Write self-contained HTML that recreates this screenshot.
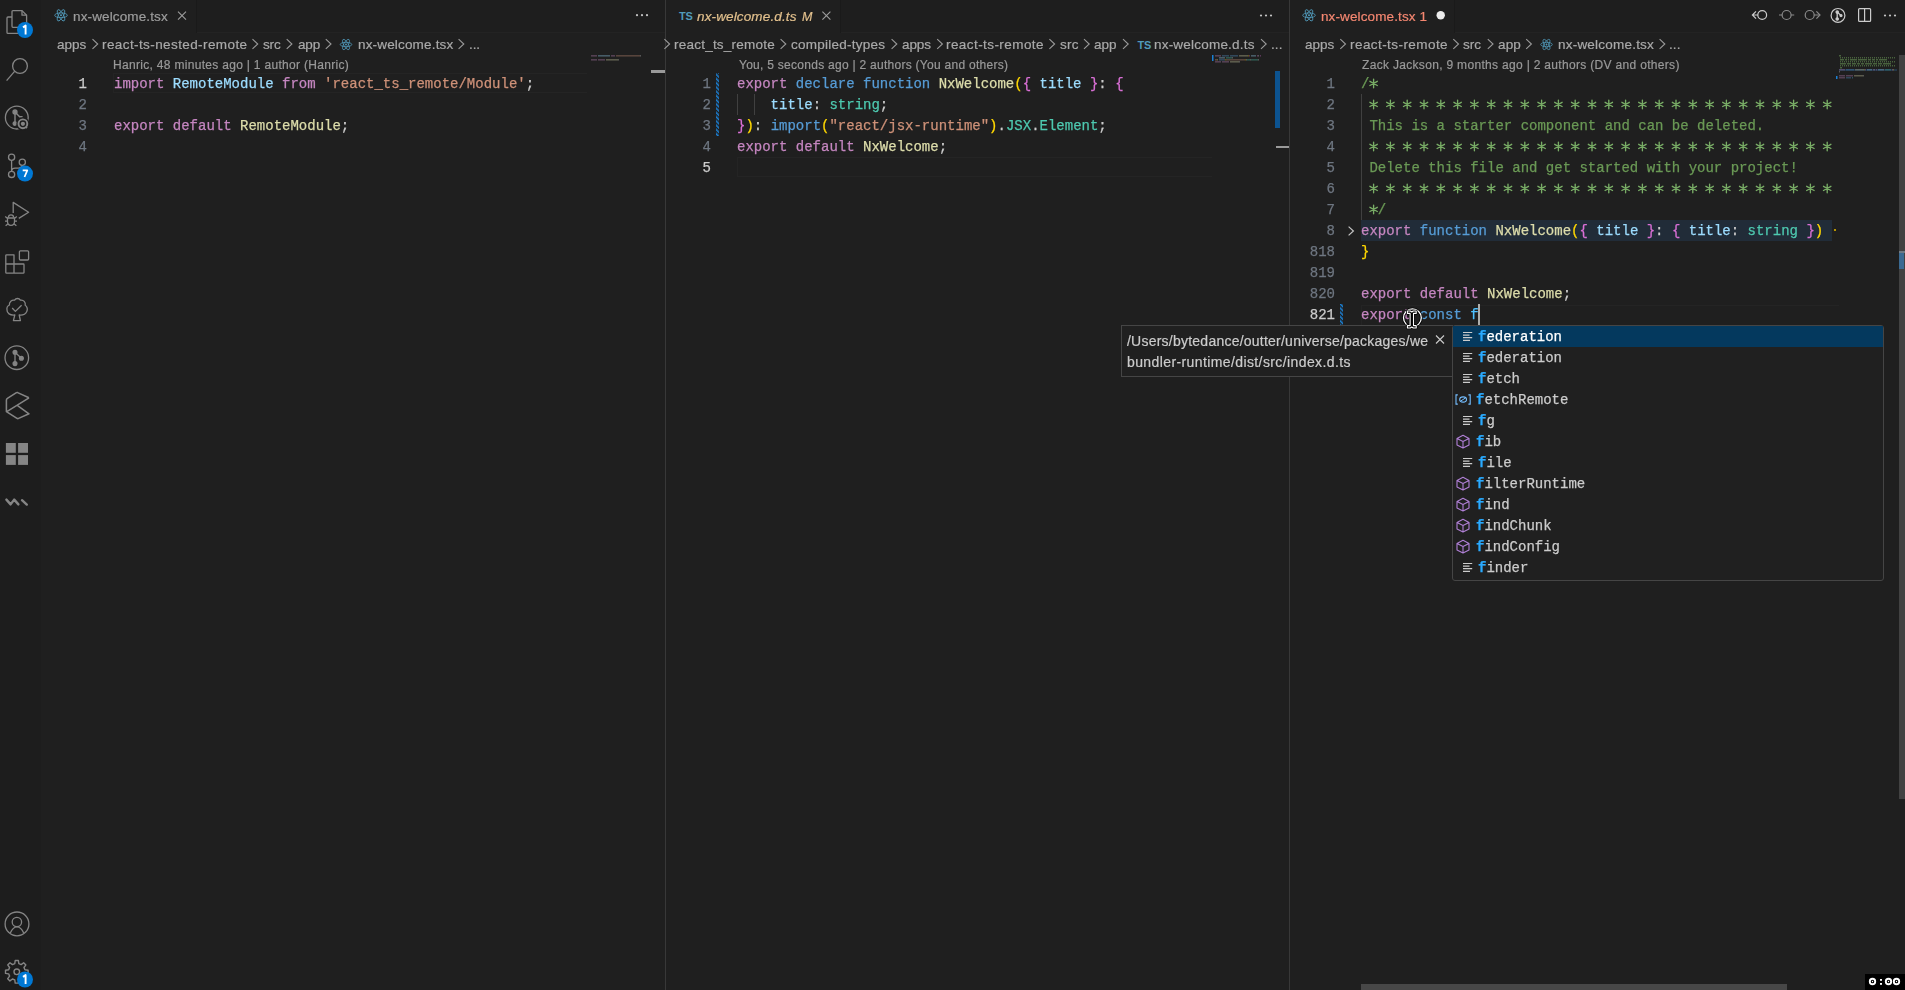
<!DOCTYPE html>
<html><head><meta charset="utf-8">
<style>
*{margin:0;padding:0;box-sizing:border-box}
html,body{width:1905px;height:990px;overflow:hidden;background:#1f1f1f}
body{position:relative;font-family:"Liberation Sans",sans-serif;color:#ccc}
.a{position:absolute}
.sans{position:absolute;line-height:20px;white-space:pre;font-family:"Liberation Sans",sans-serif;will-change:transform;-webkit-text-stroke:0.2px currentColor}
.code,.ln{position:absolute;font-family:"Liberation Mono",monospace;font-size:14px;line-height:21px;white-space:pre;will-change:transform;-webkit-text-stroke:0.25px currentColor}
.ln{text-align:right}
svg{position:absolute;overflow:visible}
</style></head><body>
<div class="a" style="left:0;top:0;width:41px;height:990px;background:#1d1d1d"></div>
<div class="a" style="left:41px;top:0;width:624px;height:32px;background:#1e1e1e"></div>
<div class="a" style="left:197px;top:32px;width:468px;height:1px;background:#232323"></div>
<div class="a" style="left:41px;top:0;width:156px;height:33px;background:#1f1f1f;border-right:1px solid #1a1a1a"></div>
<div class="a" style="left:666px;top:0;width:623px;height:32px;background:#1e1e1e"></div>
<div class="a" style="left:841px;top:32px;width:448px;height:1px;background:#232323"></div>
<div class="a" style="left:666px;top:0;width:175px;height:33px;background:#1f1f1f;border-right:1px solid #1a1a1a"></div>
<div class="a" style="left:1290px;top:0;width:615px;height:32px;background:#1e1e1e"></div>
<div class="a" style="left:1455px;top:32px;width:450px;height:1px;background:#232323"></div>
<div class="a" style="left:1290px;top:0;width:165px;height:33px;background:#1f1f1f;border-right:1px solid #1a1a1a"></div>
<div class="a" style="left:665px;top:0;width:1px;height:990px;background:#383838"></div>
<div class="a" style="left:1289px;top:0;width:1px;height:990px;background:#383838"></div>
<svg width="41" height="990" style="left:0;top:0" fill="none" stroke="#858585" stroke-width="1.3" stroke-linejoin="round">
<!-- explorer -->
<path d="M19 27.3 H13 Q12 27.3 12 26.3 V11.6 Q12 10.6 13 10.6 H22 L26.6 15.2 V25"/><path d="M22 10.6 V15.2 H26.6"/>
<path d="M12 17 H8 Q7 17 7 18 V32.4 Q7 33.4 8 33.4 H18"/>
<!-- search -->
<circle cx="20" cy="66" r="7.4"/><path d="M14.6 71.4 L6.6 80.6"/>
<!-- gitlens -->
<circle cx="16.8" cy="117.6" r="11.4"/>
<path d="M15 112 V124 M15 112 L19.6 116.8 H22.6" stroke-width="1.4"/>
<circle cx="15" cy="112" r="2" fill="#858585"/><circle cx="14.8" cy="123.6" r="1.7" fill="#858585"/>
<circle cx="22.9" cy="123.8" r="6.6" fill="#1d1d1d" stroke="none"/>
<circle cx="22.9" cy="123.8" r="4.4" stroke-width="1.9"/><circle cx="22.9" cy="123.8" r="2.1" fill="#858585" stroke="none"/><path d="M25.8 126.9 L27 128" stroke-width="1.8"/>
<!-- source control -->
<circle cx="11.6" cy="157.3" r="3.1"/><circle cx="22.3" cy="162.3" r="3.1"/><circle cx="11.6" cy="174.4" r="3.1"/>
<path d="M11.6 160.4 V171.3 M11.6 170.8 Q12 168.2 15 168.2 H18.4 Q21.4 168.2 22.1 165.4"/>
<!-- run debug -->
<path d="M13.2 213 V202.4 L28.6 212.3 L18.8 218.4"/>
<path d="M8.4 217.6 Q8.4 214.8 11 214.8 Q13.6 214.8 13.6 217.6"/>
<path d="M7.5 218 H14.5 V221.6 Q14.5 225.4 11 225.4 Q7.5 225.4 7.5 221.6 Z"/>
<path d="M7.4 218.2 L5.2 216.4 M14.6 218.2 L16.8 216.4 M7.4 221.2 H5 M14.6 221.2 H17 M7.8 224 L5.6 225.8 M14.2 224 L16.4 225.8"/>
<!-- extensions -->
<rect x="19.4" y="250.8" width="9.2" height="9.2" rx="1"/>
<path d="M5.8 264 V255.6 Q5.8 254.8 6.6 254.8 H14 V264 H23.4 Q24 264 24 264.8 V272.4 Q24 273.2 23.2 273.2 H6.6 Q5.8 273.2 5.8 272.4 Z M5.8 264 H14 V273.2"/>
<!-- tree check -->
<path d="M14.8 315 C10 315.6 6.8 313 7 310 C6.6 307.6 8 305.6 9.4 305 C9 302 11.8 299.6 14.6 300.2 C16 297.9 19 297.9 20.4 300.2 C23.6 299.6 25.8 302.4 25.2 305.2 C27.4 306.6 27.8 309.6 26.8 311.4 C25.6 314 22.8 315.4 19.2 315 L20.4 320.6 H13.4 Z"/>
<path d="M12.2 308 L15.4 311.4 L21.6 305.3"/>
<!-- git graph -->
<circle cx="16.8" cy="357.7" r="11.8"/>
<path d="M15 352.3 V363.6 M15 352.3 L21.4 358.2"/>
<circle cx="15" cy="352.3" r="1.9" fill="#858585"/><circle cx="15" cy="363.6" r="1.9" fill="#858585"/><circle cx="21.4" cy="358.2" r="1.9" fill="#858585"/>
<!-- hex c -->
<path d="M29 397.8 L17.6 392.6 Q16.8 392.3 16 392.8 L7.4 398.4 Q6.4 399 6.4 400.2 V411.6 L17 418.4 Q17.8 418.9 18.6 418.4 L29 413.8 L17.6 405.6 M29 397.8 L6.8 411.6" stroke-width="1.55"/>
<!-- grid -->
<g fill="#858585" stroke="none"><rect x="5.9" y="443" width="9.9" height="9.8"/><rect x="18.1" y="443" width="9.9" height="9.8"/><rect x="5.9" y="455.1" width="9.9" height="9.8"/><rect x="18.1" y="455.1" width="9.9" height="9.8"/></g>
<!-- wave -->
<path d="M6.4 499.6 L10.6 504.4 L14.2 499.6 L18.4 504.4 M22 500.2 L26.8 504.6" stroke-width="2.4" stroke-linecap="round"/>
<!-- account -->
<circle cx="17" cy="923.9" r="11.9"/><circle cx="16.9" cy="922" r="4.7"/>
<path d="M10.3 933 C12 929 14.5 926.8 17 926.8 C19.5 926.8 22 929 23.7 933"/>
<!-- gear -->
<path d="M14.77,963.65 L15.21,960.51 L18.39,960.51 L18.83,963.65 L21.13,964.60 L23.66,962.70 L25.90,964.94 L24.00,967.47 L24.95,969.77 L28.09,970.21 L28.09,973.39 L24.95,973.83 L24.00,976.13 L25.90,978.66 L23.66,980.90 L21.13,979.00 L18.83,979.95 L18.39,983.09 L15.21,983.09 L14.77,979.95 L12.47,979.00 L9.94,980.90 L7.70,978.66 L9.60,976.13 L8.65,973.83 L5.51,973.39 L5.51,970.21 L8.65,969.77 L9.60,967.47 L7.70,964.94 L9.94,962.70 L12.47,964.60 Z" stroke-width="1.4"/><circle cx="16.8" cy="971.8" r="2.8" stroke-width="1.4"/>
</svg>
<svg width="1" height="1" style="left:0;top:0"><circle cx="25" cy="30" r="8" fill="#0078d4"/><path d="M23 27.4 L25.6 25.6 V34.4" stroke="#fff" stroke-width="1.9" fill="none" stroke-linejoin="round"/><circle cx="25" cy="173.6" r="8" fill="#0078d4"/><path d="M22.7 170.4 H27.3 L24.5 177.0" stroke="#fff" stroke-width="1.7" fill="none" stroke-linejoin="round"/><circle cx="25" cy="979.5" r="8" fill="#0078d4"/><path d="M23 976.9 L25.6 975.1 V983.9" stroke="#fff" stroke-width="1.9" fill="none" stroke-linejoin="round"/></svg>
<svg width="1" height="1" style="left:0;top:0" fill="none" stroke="#519aba" stroke-width="1">
<g transform="translate(61,15.3) scale(1.0)" stroke-width="0.85"><ellipse rx="6.3" ry="2.4"/><ellipse rx="6.3" ry="2.4" transform="rotate(60)"/><ellipse rx="6.3" ry="2.4" transform="rotate(120)"/><circle r="1" fill="#519aba" stroke="none"/></g></svg>
<svg width="1" height="1" style="left:0;top:0" fill="none" stroke="#9d9d9d" stroke-width="1.1"><path d="M178 11.6 L186 19.6 M186 11.6 L178 19.6"/></svg>
<svg width="1" height="1" style="left:0;top:0" fill="#c5c5c5"><circle cx="637" cy="15.2" r="1.1"/><circle cx="642" cy="15.2" r="1.1"/><circle cx="647" cy="15.2" r="1.1"/></svg>
<svg width="1" height="1" style="left:0;top:0" fill="none" stroke="#9a9a9a" stroke-width="1.1"><path d="M92.5 39.2 L97.7 44 L92.5 48.8"/></svg>
<svg width="1" height="1" style="left:0;top:0" fill="none" stroke="#9a9a9a" stroke-width="1.1"><path d="M252.5 39.2 L257.7 44 L252.5 48.8"/></svg>
<svg width="1" height="1" style="left:0;top:0" fill="none" stroke="#9a9a9a" stroke-width="1.1"><path d="M286.7 39.2 L291.9 44 L286.7 48.8"/></svg>
<svg width="1" height="1" style="left:0;top:0" fill="none" stroke="#9a9a9a" stroke-width="1.1"><path d="M325.8 39.2 L331.0 44 L325.8 48.8"/></svg>
<svg width="1" height="1" style="left:0;top:0" fill="none" stroke="#519aba" stroke-width="1">
<g transform="translate(346,44.5) scale(0.92)" stroke-width="0.85"><ellipse rx="6.3" ry="2.4"/><ellipse rx="6.3" ry="2.4" transform="rotate(60)"/><ellipse rx="6.3" ry="2.4" transform="rotate(120)"/><circle r="1" fill="#519aba" stroke="none"/></g></svg>
<svg width="1" height="1" style="left:0;top:0" fill="none" stroke="#9a9a9a" stroke-width="1.1"><path d="M458.6 39.2 L463.8 44 L458.6 48.8"/></svg>
<div class="a" style="left:113px;top:73px;width:474px;height:20px;border:1px solid #242424;border-right:none"></div>
<div class="ln" style="left:26.599999999999994px;top:74px;width:60px;color:#cccccc">1</div>
<div class="ln" style="left:26.599999999999994px;top:95px;width:60px;color:#6e7681">2</div>
<div class="ln" style="left:26.599999999999994px;top:116px;width:60px;color:#6e7681">3</div>
<div class="ln" style="left:26.599999999999994px;top:137px;width:60px;color:#6e7681">4</div>
<div class="code" style="left:113.6px;top:74px"><span style="color:#c586c0">import </span><span style="color:#9cdcfe">RemoteModule </span><span style="color:#c586c0">from </span><span style="color:#ce9178">'react_ts_remote/Module'</span><span style="color:#cccccc">;</span></div>
<div class="code" style="left:113.6px;top:116px"><span style="color:#c586c0">export </span><span style="color:#c586c0">default </span><span style="color:#dcdcaa">RemoteModule</span><span style="color:#cccccc">;</span></div>
<div class="a" style="left:651px;top:70px;width:14px;height:3px;background:#9a9a9a"></div>
<div class="a" style="left:679px;top:8.5px;font:bold 11px/14px 'Liberation Sans';color:#519aba;letter-spacing:-0.3px">TS</div>
<svg width="1" height="1" style="left:0;top:0" fill="none" stroke="#9d9d9d" stroke-width="1.1"><path d="M822.4 11.6 L830.4 19.6 M830.4 11.6 L822.4 19.6"/></svg>
<svg width="1" height="1" style="left:0;top:0" fill="#c5c5c5"><circle cx="1261" cy="15.5" r="1.1"/><circle cx="1266" cy="15.5" r="1.1"/><circle cx="1271" cy="15.5" r="1.1"/></svg>
<svg width="1" height="1" style="left:0;top:0" fill="none" stroke="#9a9a9a" stroke-width="1.1"><path d="M664.4 39.2 L669.6 44 L664.4 48.8"/></svg>
<svg width="1" height="1" style="left:0;top:0" fill="none" stroke="#9a9a9a" stroke-width="1.1"><path d="M780.6 39.2 L785.8000000000001 44 L780.6 48.8"/></svg>
<svg width="1" height="1" style="left:0;top:0" fill="none" stroke="#9a9a9a" stroke-width="1.1"><path d="M891.6 39.2 L896.8000000000001 44 L891.6 48.8"/></svg>
<svg width="1" height="1" style="left:0;top:0" fill="none" stroke="#9a9a9a" stroke-width="1.1"><path d="M937.2 39.2 L942.4000000000001 44 L937.2 48.8"/></svg>
<svg width="1" height="1" style="left:0;top:0" fill="none" stroke="#9a9a9a" stroke-width="1.1"><path d="M1049.4 39.2 L1054.6000000000001 44 L1049.4 48.8"/></svg>
<svg width="1" height="1" style="left:0;top:0" fill="none" stroke="#9a9a9a" stroke-width="1.1"><path d="M1084 39.2 L1089.2 44 L1084 48.8"/></svg>
<svg width="1" height="1" style="left:0;top:0" fill="none" stroke="#9a9a9a" stroke-width="1.1"><path d="M1123 39.2 L1128.2 44 L1123 48.8"/></svg>
<div class="a" style="left:1137.6px;top:37.5px;font:bold 11px/14px 'Liberation Sans';color:#519aba;letter-spacing:-0.3px">TS</div>
<svg width="1" height="1" style="left:0;top:0" fill="none" stroke="#9a9a9a" stroke-width="1.1"><path d="M1261 39.2 L1266.2 44 L1261 48.8"/></svg>
<div class="a" style="left:737px;top:157px;width:475px;height:20px;border:1px solid #242424;border-right:none"></div>
<div class="ln" style="left:651px;top:74px;width:60px;color:#6e7681">1</div>
<div class="ln" style="left:651px;top:95px;width:60px;color:#6e7681">2</div>
<div class="ln" style="left:651px;top:116px;width:60px;color:#6e7681">3</div>
<div class="ln" style="left:651px;top:137px;width:60px;color:#6e7681">4</div>
<div class="ln" style="left:651px;top:158px;width:60px;color:#cccccc">5</div>
<svg width="1" height="1" style="left:0;top:0"><defs><pattern id="hatch" width="3" height="3" patternUnits="userSpaceOnUse" patternTransform="rotate(-45)"><rect width="1.6" height="3" fill="#1b80d4"/></pattern></defs>
<rect x="716" y="73" width="3" height="63" fill="url(#hatch)"/><rect x="1340" y="304" width="3" height="21" fill="url(#hatch)"/></svg>
<div class="a" style="left:737px;top:94px;width:1px;height:21px;background:#404040"></div>
<div class="a" style="left:754px;top:94px;width:1px;height:21px;background:#404040"></div>
<div class="code" style="left:737px;top:74px"><span style="color:#c586c0">export </span><span style="color:#569cd6">declare </span><span style="color:#569cd6">function </span><span style="color:#dcdcaa">NxWelcome</span><span style="color:#ffd700">(</span><span style="color:#da70d6">{ </span><span style="color:#9cdcfe">title </span><span style="color:#da70d6">}</span><span style="color:#cccccc">: </span><span style="color:#da70d6">{</span></div>
<div class="code" style="left:737px;top:95px"><span style="color:#cccccc">    </span><span style="color:#9cdcfe">title</span><span style="color:#cccccc">: </span><span style="color:#4ec9b0">string</span><span style="color:#cccccc">;</span></div>
<div class="code" style="left:737px;top:116px"><span style="color:#da70d6">}</span><span style="color:#ffd700">)</span><span style="color:#cccccc">: </span><span style="color:#569cd6">import</span><span style="color:#ffd700">(</span><span style="color:#ce9178">"react/jsx-runtime"</span><span style="color:#ffd700">)</span><span style="color:#cccccc">.</span><span style="color:#4ec9b0">JSX</span><span style="color:#cccccc">.</span><span style="color:#4ec9b0">Element</span><span style="color:#cccccc">;</span></div>
<div class="code" style="left:737px;top:137px"><span style="color:#c586c0">export </span><span style="color:#c586c0">default </span><span style="color:#dcdcaa">NxWelcome</span><span style="color:#cccccc">;</span></div>
<div class="a" style="left:1275px;top:71px;width:5px;height:57px;background:#0c5390"></div>
<div class="a" style="left:1276px;top:146px;width:13px;height:2px;background:#9a9a9a"></div>
<svg width="1" height="1" style="left:0;top:0" fill="none" stroke="#519aba" stroke-width="1">
<g transform="translate(1309,15.3) scale(1.0)" stroke-width="0.85"><ellipse rx="6.3" ry="2.4"/><ellipse rx="6.3" ry="2.4" transform="rotate(60)"/><ellipse rx="6.3" ry="2.4" transform="rotate(120)"/><circle r="1" fill="#519aba" stroke="none"/></g></svg>
<svg width="1" height="1" style="left:0;top:0"><circle cx="1440.7" cy="15.2" r="4.2" fill="#ececec"/></svg>
<svg width="1" height="1" style="left:0;top:0" fill="none" stroke-width="1.2">
<g stroke="#cccccc"><circle cx="1762.2" cy="15" r="4.4"/><path d="M1757.8 15 H1753.5 M1756 11.3 L1752.4 15 L1756 18.7"/></g>
<g stroke="#8a8a8a"><circle cx="1786.6" cy="15" r="4.5"/><path d="M1779 15 H1782.1 M1791.1 15 H1794.2"/></g>
<g stroke="#8a8a8a"><circle cx="1809.7" cy="15" r="4.5"/><path d="M1814.2 15 H1818.6 M1816.4 11.3 L1820 15 L1816.4 18.7"/></g>
<g stroke="#cccccc"><circle cx="1838" cy="15.4" r="6.9"/><path d="M1837.2 12.1 V19 M1837.2 12.1 L1841 15.4" stroke-width="1.3"/><circle cx="1837.2" cy="12.1" r="1.2" fill="#ccc"/><circle cx="1837.2" cy="19" r="1.2" fill="#ccc"/><circle cx="1841" cy="15.6" r="1" fill="#ccc"/></g>
<g stroke="#cccccc"><rect x="1858.6" y="8.6" width="12" height="12.8" rx="1"/><path d="M1864.6 8.6 V21.4"/></g>
</svg>
<svg width="1" height="1" style="left:0;top:0" fill="#c5c5c5"><circle cx="1885" cy="15.5" r="1.1"/><circle cx="1890" cy="15.5" r="1.1"/><circle cx="1895" cy="15.5" r="1.1"/></svg>
<svg width="1" height="1" style="left:0;top:0" fill="none" stroke="#9a9a9a" stroke-width="1.1"><path d="M1340.3 39.2 L1345.5 44 L1340.3 48.8"/></svg>
<svg width="1" height="1" style="left:0;top:0" fill="none" stroke="#9a9a9a" stroke-width="1.1"><path d="M1453.3 39.2 L1458.5 44 L1453.3 48.8"/></svg>
<svg width="1" height="1" style="left:0;top:0" fill="none" stroke="#9a9a9a" stroke-width="1.1"><path d="M1487.8 39.2 L1493.0 44 L1487.8 48.8"/></svg>
<svg width="1" height="1" style="left:0;top:0" fill="none" stroke="#9a9a9a" stroke-width="1.1"><path d="M1526.2 39.2 L1531.4 44 L1526.2 48.8"/></svg>
<svg width="1" height="1" style="left:0;top:0" fill="none" stroke="#519aba" stroke-width="1">
<g transform="translate(1546.5,44.5) scale(0.92)" stroke-width="0.85"><ellipse rx="6.3" ry="2.4"/><ellipse rx="6.3" ry="2.4" transform="rotate(60)"/><ellipse rx="6.3" ry="2.4" transform="rotate(120)"/><circle r="1" fill="#519aba" stroke="none"/></g></svg>
<svg width="1" height="1" style="left:0;top:0" fill="none" stroke="#9a9a9a" stroke-width="1.1"><path d="M1659.6 39.2 L1664.8 44 L1659.6 48.8"/></svg>
<div class="ln" style="left:1275px;top:74px;width:60px;color:#6e7681">1</div>
<div class="ln" style="left:1275px;top:95px;width:60px;color:#6e7681">2</div>
<div class="ln" style="left:1275px;top:116px;width:60px;color:#6e7681">3</div>
<div class="ln" style="left:1275px;top:137px;width:60px;color:#6e7681">4</div>
<div class="ln" style="left:1275px;top:158px;width:60px;color:#6e7681">5</div>
<div class="ln" style="left:1275px;top:179px;width:60px;color:#6e7681">6</div>
<div class="ln" style="left:1275px;top:200px;width:60px;color:#6e7681">7</div>
<div class="ln" style="left:1275px;top:221px;width:60px;color:#6e7681">8</div>
<div class="ln" style="left:1275px;top:242px;width:60px;color:#6e7681">818</div>
<div class="ln" style="left:1275px;top:263px;width:60px;color:#6e7681">819</div>
<div class="ln" style="left:1275px;top:284px;width:60px;color:#6e7681">820</div>
<div class="ln" style="left:1275px;top:305px;width:60px;color:#cccccc">821</div>
<div class="a" style="left:1361px;top:94px;width:1px;height:126px;background:#404040"></div>
<div class="a" style="left:1361px;top:220px;width:471px;height:21px;background:#212c38"></div>
<div class="a" style="left:1361px;top:305px;width:478px;height:21px;border:1px solid #242424;border-right:none;border-bottom:none"></div>
<div class="code" style="left:1361px;top:74px"><span style="color:#6a9955">/</span></div>
<svg width="1" height="1" style="left:0;top:0"><path d="M1373.6 79.1 V87.7 M1369.9 81.3 L1377.3 85.5 M1369.9 85.5 L1377.3 81.3 M1373.6 100.1 V108.7 M1369.9 102.3 L1377.3 106.5 M1369.9 106.5 L1377.3 102.3 M1390.4 100.1 V108.7 M1386.7 102.3 L1394.1 106.5 M1386.7 106.5 L1394.1 102.3 M1407.2 100.1 V108.7 M1403.5 102.3 L1410.9 106.5 M1403.5 106.5 L1410.9 102.3 M1424.0 100.1 V108.7 M1420.3 102.3 L1427.7 106.5 M1420.3 106.5 L1427.7 102.3 M1440.8 100.1 V108.7 M1437.1 102.3 L1444.5 106.5 M1437.1 106.5 L1444.5 102.3 M1457.6 100.1 V108.7 M1453.9 102.3 L1461.3 106.5 M1453.9 106.5 L1461.3 102.3 M1474.4 100.1 V108.7 M1470.7 102.3 L1478.1 106.5 M1470.7 106.5 L1478.1 102.3 M1491.2 100.1 V108.7 M1487.5 102.3 L1494.9 106.5 M1487.5 106.5 L1494.9 102.3 M1508.0 100.1 V108.7 M1504.3 102.3 L1511.7 106.5 M1504.3 106.5 L1511.7 102.3 M1524.8 100.1 V108.7 M1521.1 102.3 L1528.5 106.5 M1521.1 106.5 L1528.5 102.3 M1541.6 100.1 V108.7 M1537.9 102.3 L1545.3 106.5 M1537.9 106.5 L1545.3 102.3 M1558.4 100.1 V108.7 M1554.7 102.3 L1562.1 106.5 M1554.7 106.5 L1562.1 102.3 M1575.2 100.1 V108.7 M1571.5 102.3 L1578.9 106.5 M1571.5 106.5 L1578.9 102.3 M1592.0 100.1 V108.7 M1588.3 102.3 L1595.7 106.5 M1588.3 106.5 L1595.7 102.3 M1608.8 100.1 V108.7 M1605.1 102.3 L1612.5 106.5 M1605.1 106.5 L1612.5 102.3 M1625.6 100.1 V108.7 M1621.9 102.3 L1629.3 106.5 M1621.9 106.5 L1629.3 102.3 M1642.4 100.1 V108.7 M1638.7 102.3 L1646.1 106.5 M1638.7 106.5 L1646.1 102.3 M1659.2 100.1 V108.7 M1655.5 102.3 L1662.9 106.5 M1655.5 106.5 L1662.9 102.3 M1676.0 100.1 V108.7 M1672.3 102.3 L1679.7 106.5 M1672.3 106.5 L1679.7 102.3 M1692.8 100.1 V108.7 M1689.1 102.3 L1696.5 106.5 M1689.1 106.5 L1696.5 102.3 M1709.6 100.1 V108.7 M1705.9 102.3 L1713.3 106.5 M1705.9 106.5 L1713.3 102.3 M1726.4 100.1 V108.7 M1722.7 102.3 L1730.1 106.5 M1722.7 106.5 L1730.1 102.3 M1743.2 100.1 V108.7 M1739.5 102.3 L1746.9 106.5 M1739.5 106.5 L1746.9 102.3 M1760.0 100.1 V108.7 M1756.3 102.3 L1763.7 106.5 M1756.3 106.5 L1763.7 102.3 M1776.8 100.1 V108.7 M1773.1 102.3 L1780.5 106.5 M1773.1 106.5 L1780.5 102.3 M1793.6 100.1 V108.7 M1789.9 102.3 L1797.3 106.5 M1789.9 106.5 L1797.3 102.3 M1810.4 100.1 V108.7 M1806.7 102.3 L1814.1 106.5 M1806.7 106.5 L1814.1 102.3 M1827.2 100.1 V108.7 M1823.5 102.3 L1830.9 106.5 M1823.5 106.5 L1830.9 102.3 M1373.6 142.1 V150.7 M1369.9 144.3 L1377.3 148.5 M1369.9 148.5 L1377.3 144.3 M1390.4 142.1 V150.7 M1386.7 144.3 L1394.1 148.5 M1386.7 148.5 L1394.1 144.3 M1407.2 142.1 V150.7 M1403.5 144.3 L1410.9 148.5 M1403.5 148.5 L1410.9 144.3 M1424.0 142.1 V150.7 M1420.3 144.3 L1427.7 148.5 M1420.3 148.5 L1427.7 144.3 M1440.8 142.1 V150.7 M1437.1 144.3 L1444.5 148.5 M1437.1 148.5 L1444.5 144.3 M1457.6 142.1 V150.7 M1453.9 144.3 L1461.3 148.5 M1453.9 148.5 L1461.3 144.3 M1474.4 142.1 V150.7 M1470.7 144.3 L1478.1 148.5 M1470.7 148.5 L1478.1 144.3 M1491.2 142.1 V150.7 M1487.5 144.3 L1494.9 148.5 M1487.5 148.5 L1494.9 144.3 M1508.0 142.1 V150.7 M1504.3 144.3 L1511.7 148.5 M1504.3 148.5 L1511.7 144.3 M1524.8 142.1 V150.7 M1521.1 144.3 L1528.5 148.5 M1521.1 148.5 L1528.5 144.3 M1541.6 142.1 V150.7 M1537.9 144.3 L1545.3 148.5 M1537.9 148.5 L1545.3 144.3 M1558.4 142.1 V150.7 M1554.7 144.3 L1562.1 148.5 M1554.7 148.5 L1562.1 144.3 M1575.2 142.1 V150.7 M1571.5 144.3 L1578.9 148.5 M1571.5 148.5 L1578.9 144.3 M1592.0 142.1 V150.7 M1588.3 144.3 L1595.7 148.5 M1588.3 148.5 L1595.7 144.3 M1608.8 142.1 V150.7 M1605.1 144.3 L1612.5 148.5 M1605.1 148.5 L1612.5 144.3 M1625.6 142.1 V150.7 M1621.9 144.3 L1629.3 148.5 M1621.9 148.5 L1629.3 144.3 M1642.4 142.1 V150.7 M1638.7 144.3 L1646.1 148.5 M1638.7 148.5 L1646.1 144.3 M1659.2 142.1 V150.7 M1655.5 144.3 L1662.9 148.5 M1655.5 148.5 L1662.9 144.3 M1676.0 142.1 V150.7 M1672.3 144.3 L1679.7 148.5 M1672.3 148.5 L1679.7 144.3 M1692.8 142.1 V150.7 M1689.1 144.3 L1696.5 148.5 M1689.1 148.5 L1696.5 144.3 M1709.6 142.1 V150.7 M1705.9 144.3 L1713.3 148.5 M1705.9 148.5 L1713.3 144.3 M1726.4 142.1 V150.7 M1722.7 144.3 L1730.1 148.5 M1722.7 148.5 L1730.1 144.3 M1743.2 142.1 V150.7 M1739.5 144.3 L1746.9 148.5 M1739.5 148.5 L1746.9 144.3 M1760.0 142.1 V150.7 M1756.3 144.3 L1763.7 148.5 M1756.3 148.5 L1763.7 144.3 M1776.8 142.1 V150.7 M1773.1 144.3 L1780.5 148.5 M1773.1 148.5 L1780.5 144.3 M1793.6 142.1 V150.7 M1789.9 144.3 L1797.3 148.5 M1789.9 148.5 L1797.3 144.3 M1810.4 142.1 V150.7 M1806.7 144.3 L1814.1 148.5 M1806.7 148.5 L1814.1 144.3 M1827.2 142.1 V150.7 M1823.5 144.3 L1830.9 148.5 M1823.5 148.5 L1830.9 144.3 M1373.6 184.1 V192.7 M1369.9 186.3 L1377.3 190.5 M1369.9 190.5 L1377.3 186.3 M1390.4 184.1 V192.7 M1386.7 186.3 L1394.1 190.5 M1386.7 190.5 L1394.1 186.3 M1407.2 184.1 V192.7 M1403.5 186.3 L1410.9 190.5 M1403.5 190.5 L1410.9 186.3 M1424.0 184.1 V192.7 M1420.3 186.3 L1427.7 190.5 M1420.3 190.5 L1427.7 186.3 M1440.8 184.1 V192.7 M1437.1 186.3 L1444.5 190.5 M1437.1 190.5 L1444.5 186.3 M1457.6 184.1 V192.7 M1453.9 186.3 L1461.3 190.5 M1453.9 190.5 L1461.3 186.3 M1474.4 184.1 V192.7 M1470.7 186.3 L1478.1 190.5 M1470.7 190.5 L1478.1 186.3 M1491.2 184.1 V192.7 M1487.5 186.3 L1494.9 190.5 M1487.5 190.5 L1494.9 186.3 M1508.0 184.1 V192.7 M1504.3 186.3 L1511.7 190.5 M1504.3 190.5 L1511.7 186.3 M1524.8 184.1 V192.7 M1521.1 186.3 L1528.5 190.5 M1521.1 190.5 L1528.5 186.3 M1541.6 184.1 V192.7 M1537.9 186.3 L1545.3 190.5 M1537.9 190.5 L1545.3 186.3 M1558.4 184.1 V192.7 M1554.7 186.3 L1562.1 190.5 M1554.7 190.5 L1562.1 186.3 M1575.2 184.1 V192.7 M1571.5 186.3 L1578.9 190.5 M1571.5 190.5 L1578.9 186.3 M1592.0 184.1 V192.7 M1588.3 186.3 L1595.7 190.5 M1588.3 190.5 L1595.7 186.3 M1608.8 184.1 V192.7 M1605.1 186.3 L1612.5 190.5 M1605.1 190.5 L1612.5 186.3 M1625.6 184.1 V192.7 M1621.9 186.3 L1629.3 190.5 M1621.9 190.5 L1629.3 186.3 M1642.4 184.1 V192.7 M1638.7 186.3 L1646.1 190.5 M1638.7 190.5 L1646.1 186.3 M1659.2 184.1 V192.7 M1655.5 186.3 L1662.9 190.5 M1655.5 190.5 L1662.9 186.3 M1676.0 184.1 V192.7 M1672.3 186.3 L1679.7 190.5 M1672.3 190.5 L1679.7 186.3 M1692.8 184.1 V192.7 M1689.1 186.3 L1696.5 190.5 M1689.1 190.5 L1696.5 186.3 M1709.6 184.1 V192.7 M1705.9 186.3 L1713.3 190.5 M1705.9 190.5 L1713.3 186.3 M1726.4 184.1 V192.7 M1722.7 186.3 L1730.1 190.5 M1722.7 190.5 L1730.1 186.3 M1743.2 184.1 V192.7 M1739.5 186.3 L1746.9 190.5 M1739.5 190.5 L1746.9 186.3 M1760.0 184.1 V192.7 M1756.3 186.3 L1763.7 190.5 M1756.3 190.5 L1763.7 186.3 M1776.8 184.1 V192.7 M1773.1 186.3 L1780.5 190.5 M1773.1 190.5 L1780.5 186.3 M1793.6 184.1 V192.7 M1789.9 186.3 L1797.3 190.5 M1789.9 190.5 L1797.3 186.3 M1810.4 184.1 V192.7 M1806.7 186.3 L1814.1 190.5 M1806.7 190.5 L1814.1 186.3 M1827.2 184.1 V192.7 M1823.5 186.3 L1830.9 190.5 M1823.5 190.5 L1830.9 186.3 M1373.6 205.1 V213.7 M1369.9 207.3 L1377.3 211.5 M1369.9 211.5 L1377.3 207.3" stroke="#79ad66" stroke-width="1.35" stroke-linecap="round" fill="none"/></svg>
<div class="code" style="left:1361px;top:116px"><span style="color:#6a9955"> This is a starter component and can be deleted.</span></div>
<div class="code" style="left:1361px;top:158px"><span style="color:#6a9955"> Delete this file and get started with your project!</span></div>
<div class="code" style="left:1361px;top:200px"><span style="color:#6a9955">  /</span></div>
<div class="code" style="left:1361px;top:221px"><span style="color:#c586c0">export </span><span style="color:#569cd6">function </span><span style="color:#dcdcaa">NxWelcome</span><span style="color:#ffd700">(</span><span style="color:#da70d6">{ </span><span style="color:#9cdcfe">title </span><span style="color:#da70d6">}</span><span style="color:#cccccc">: </span><span style="color:#da70d6">{ </span><span style="color:#9cdcfe">title</span><span style="color:#cccccc">: </span><span style="color:#4ec9b0">string </span><span style="color:#da70d6">}</span><span style="color:#ffd700">)</span></div>
<div class="a" style="left:1834px;top:229px;width:2px;height:2px;background:#b89500"></div>
<svg width="1" height="1" style="left:0;top:0" fill="none" stroke="#c5c5c5" stroke-width="1.2"><path d="M1348.6 226.6 L1353.4 231 L1348.6 235.4"/></svg>
<div class="code" style="left:1361px;top:242px"><span style="color:#ffd700">}</span></div>
<div class="code" style="left:1361px;top:284px"><span style="color:#c586c0">export </span><span style="color:#c586c0">default </span><span style="color:#dcdcaa">NxWelcome</span><span style="color:#cccccc">;</span></div>
<div class="code" style="left:1361px;top:305px"><span style="color:#c586c0">export </span><span style="color:#569cd6">const </span><span style="color:#4fc1ff">f</span></div>
<div class="a" style="left:1478px;top:304px;width:2px;height:21px;background:#aeafad"></div>
<svg width="1905" height="100" style="left:0;top:0"><rect x="591" y="55" width="1" height="1.6" fill="#c586c0" opacity="0.32"/><rect x="592" y="55" width="1" height="1.6" fill="#c586c0" opacity="0.32"/><rect x="593" y="55" width="1" height="1.6" fill="#c586c0" opacity="0.32"/><rect x="594" y="55" width="1" height="1.6" fill="#c586c0" opacity="0.32"/><rect x="595" y="55" width="1" height="1.6" fill="#c586c0" opacity="0.32"/><rect x="596" y="55" width="1" height="1.6" fill="#c586c0" opacity="0.32"/><rect x="598" y="55" width="1" height="1.6" fill="#9cdcfe" opacity="0.32"/><rect x="599" y="55" width="1" height="1.6" fill="#9cdcfe" opacity="0.32"/><rect x="600" y="55" width="1" height="1.6" fill="#9cdcfe" opacity="0.32"/><rect x="601" y="55" width="1" height="1.6" fill="#9cdcfe" opacity="0.32"/><rect x="602" y="55" width="1" height="1.6" fill="#9cdcfe" opacity="0.32"/><rect x="603" y="55" width="1" height="1.6" fill="#9cdcfe" opacity="0.32"/><rect x="604" y="55" width="1" height="1.6" fill="#9cdcfe" opacity="0.32"/><rect x="605" y="55" width="1" height="1.6" fill="#9cdcfe" opacity="0.32"/><rect x="606" y="55" width="1" height="1.6" fill="#9cdcfe" opacity="0.32"/><rect x="607" y="55" width="1" height="1.6" fill="#9cdcfe" opacity="0.32"/><rect x="608" y="55" width="1" height="1.6" fill="#9cdcfe" opacity="0.32"/><rect x="609" y="55" width="1" height="1.6" fill="#9cdcfe" opacity="0.32"/><rect x="611" y="55" width="1" height="1.6" fill="#c586c0" opacity="0.32"/><rect x="612" y="55" width="1" height="1.6" fill="#c586c0" opacity="0.32"/><rect x="613" y="55" width="1" height="1.6" fill="#c586c0" opacity="0.32"/><rect x="614" y="55" width="1" height="1.6" fill="#c586c0" opacity="0.32"/><rect x="616" y="55" width="1" height="1.6" fill="#ce9178" opacity="0.32"/><rect x="617" y="55" width="1" height="1.6" fill="#ce9178" opacity="0.32"/><rect x="618" y="55" width="1" height="1.6" fill="#ce9178" opacity="0.32"/><rect x="619" y="55" width="1" height="1.6" fill="#ce9178" opacity="0.32"/><rect x="620" y="55" width="1" height="1.6" fill="#ce9178" opacity="0.32"/><rect x="621" y="55" width="1" height="1.6" fill="#ce9178" opacity="0.32"/><rect x="622" y="55" width="1" height="1.6" fill="#ce9178" opacity="0.32"/><rect x="623" y="55" width="1" height="1.6" fill="#ce9178" opacity="0.32"/><rect x="624" y="55" width="1" height="1.6" fill="#ce9178" opacity="0.32"/><rect x="625" y="55" width="1" height="1.6" fill="#ce9178" opacity="0.32"/><rect x="626" y="55" width="1" height="1.6" fill="#ce9178" opacity="0.32"/><rect x="627" y="55" width="1" height="1.6" fill="#ce9178" opacity="0.32"/><rect x="628" y="55" width="1" height="1.6" fill="#ce9178" opacity="0.32"/><rect x="629" y="55" width="1" height="1.6" fill="#ce9178" opacity="0.32"/><rect x="630" y="55" width="1" height="1.6" fill="#ce9178" opacity="0.32"/><rect x="631" y="55" width="1" height="1.6" fill="#ce9178" opacity="0.32"/><rect x="632" y="55" width="1" height="1.6" fill="#ce9178" opacity="0.32"/><rect x="633" y="55" width="1" height="1.6" fill="#ce9178" opacity="0.32"/><rect x="634" y="55" width="1" height="1.6" fill="#ce9178" opacity="0.32"/><rect x="635" y="55" width="1" height="1.6" fill="#ce9178" opacity="0.32"/><rect x="636" y="55" width="1" height="1.6" fill="#ce9178" opacity="0.32"/><rect x="637" y="55" width="1" height="1.6" fill="#ce9178" opacity="0.32"/><rect x="638" y="55" width="1" height="1.6" fill="#ce9178" opacity="0.32"/><rect x="639" y="55" width="1" height="1.6" fill="#ce9178" opacity="0.32"/><rect x="640" y="55" width="1" height="1.6" fill="#cccccc" opacity="0.32"/><rect x="591" y="59" width="1" height="1.6" fill="#c586c0" opacity="0.32"/><rect x="592" y="59" width="1" height="1.6" fill="#c586c0" opacity="0.32"/><rect x="593" y="59" width="1" height="1.6" fill="#c586c0" opacity="0.32"/><rect x="594" y="59" width="1" height="1.6" fill="#c586c0" opacity="0.32"/><rect x="595" y="59" width="1" height="1.6" fill="#c586c0" opacity="0.32"/><rect x="596" y="59" width="1" height="1.6" fill="#c586c0" opacity="0.32"/><rect x="598" y="59" width="1" height="1.6" fill="#c586c0" opacity="0.32"/><rect x="599" y="59" width="1" height="1.6" fill="#c586c0" opacity="0.32"/><rect x="600" y="59" width="1" height="1.6" fill="#c586c0" opacity="0.32"/><rect x="601" y="59" width="1" height="1.6" fill="#c586c0" opacity="0.32"/><rect x="602" y="59" width="1" height="1.6" fill="#c586c0" opacity="0.32"/><rect x="603" y="59" width="1" height="1.6" fill="#c586c0" opacity="0.32"/><rect x="604" y="59" width="1" height="1.6" fill="#c586c0" opacity="0.32"/><rect x="606" y="59" width="1" height="1.6" fill="#dcdcaa" opacity="0.32"/><rect x="607" y="59" width="1" height="1.6" fill="#dcdcaa" opacity="0.32"/><rect x="608" y="59" width="1" height="1.6" fill="#dcdcaa" opacity="0.32"/><rect x="609" y="59" width="1" height="1.6" fill="#dcdcaa" opacity="0.32"/><rect x="610" y="59" width="1" height="1.6" fill="#dcdcaa" opacity="0.32"/><rect x="611" y="59" width="1" height="1.6" fill="#dcdcaa" opacity="0.32"/><rect x="612" y="59" width="1" height="1.6" fill="#dcdcaa" opacity="0.32"/><rect x="613" y="59" width="1" height="1.6" fill="#dcdcaa" opacity="0.32"/><rect x="614" y="59" width="1" height="1.6" fill="#dcdcaa" opacity="0.32"/><rect x="615" y="59" width="1" height="1.6" fill="#dcdcaa" opacity="0.32"/><rect x="616" y="59" width="1" height="1.6" fill="#dcdcaa" opacity="0.32"/><rect x="617" y="59" width="1" height="1.6" fill="#dcdcaa" opacity="0.32"/><rect x="618" y="59" width="1" height="1.6" fill="#cccccc" opacity="0.32"/><rect x="1215" y="55" width="1" height="1.6" fill="#c586c0" opacity="0.32"/><rect x="1216" y="55" width="1" height="1.6" fill="#c586c0" opacity="0.32"/><rect x="1217" y="55" width="1" height="1.6" fill="#c586c0" opacity="0.32"/><rect x="1218" y="55" width="1" height="1.6" fill="#c586c0" opacity="0.32"/><rect x="1219" y="55" width="1" height="1.6" fill="#c586c0" opacity="0.32"/><rect x="1220" y="55" width="1" height="1.6" fill="#c586c0" opacity="0.32"/><rect x="1222" y="55" width="1" height="1.6" fill="#569cd6" opacity="0.32"/><rect x="1223" y="55" width="1" height="1.6" fill="#569cd6" opacity="0.32"/><rect x="1224" y="55" width="1" height="1.6" fill="#569cd6" opacity="0.32"/><rect x="1225" y="55" width="1" height="1.6" fill="#569cd6" opacity="0.32"/><rect x="1226" y="55" width="1" height="1.6" fill="#569cd6" opacity="0.32"/><rect x="1227" y="55" width="1" height="1.6" fill="#569cd6" opacity="0.32"/><rect x="1228" y="55" width="1" height="1.6" fill="#569cd6" opacity="0.32"/><rect x="1230" y="55" width="1" height="1.6" fill="#569cd6" opacity="0.32"/><rect x="1231" y="55" width="1" height="1.6" fill="#569cd6" opacity="0.32"/><rect x="1232" y="55" width="1" height="1.6" fill="#569cd6" opacity="0.32"/><rect x="1233" y="55" width="1" height="1.6" fill="#569cd6" opacity="0.32"/><rect x="1234" y="55" width="1" height="1.6" fill="#569cd6" opacity="0.32"/><rect x="1235" y="55" width="1" height="1.6" fill="#569cd6" opacity="0.32"/><rect x="1236" y="55" width="1" height="1.6" fill="#569cd6" opacity="0.32"/><rect x="1237" y="55" width="1" height="1.6" fill="#569cd6" opacity="0.32"/><rect x="1239" y="55" width="1" height="1.6" fill="#dcdcaa" opacity="0.32"/><rect x="1240" y="55" width="1" height="1.6" fill="#dcdcaa" opacity="0.32"/><rect x="1241" y="55" width="1" height="1.6" fill="#dcdcaa" opacity="0.32"/><rect x="1242" y="55" width="1" height="1.6" fill="#dcdcaa" opacity="0.32"/><rect x="1243" y="55" width="1" height="1.6" fill="#dcdcaa" opacity="0.32"/><rect x="1244" y="55" width="1" height="1.6" fill="#dcdcaa" opacity="0.32"/><rect x="1245" y="55" width="1" height="1.6" fill="#dcdcaa" opacity="0.32"/><rect x="1246" y="55" width="1" height="1.6" fill="#dcdcaa" opacity="0.32"/><rect x="1247" y="55" width="1" height="1.6" fill="#dcdcaa" opacity="0.32"/><rect x="1248" y="55" width="1" height="1.6" fill="#ffd700" opacity="0.32"/><rect x="1249" y="55" width="1" height="1.6" fill="#da70d6" opacity="0.32"/><rect x="1251" y="55" width="1" height="1.6" fill="#9cdcfe" opacity="0.32"/><rect x="1252" y="55" width="1" height="1.6" fill="#9cdcfe" opacity="0.32"/><rect x="1253" y="55" width="1" height="1.6" fill="#9cdcfe" opacity="0.32"/><rect x="1254" y="55" width="1" height="1.6" fill="#9cdcfe" opacity="0.32"/><rect x="1255" y="55" width="1" height="1.6" fill="#9cdcfe" opacity="0.32"/><rect x="1257" y="55" width="1" height="1.6" fill="#da70d6" opacity="0.32"/><rect x="1258" y="55" width="1" height="1.6" fill="#cccccc" opacity="0.32"/><rect x="1260" y="55" width="1" height="1.6" fill="#da70d6" opacity="0.32"/><rect x="1219" y="57" width="1" height="1.6" fill="#9cdcfe" opacity="0.32"/><rect x="1220" y="57" width="1" height="1.6" fill="#9cdcfe" opacity="0.32"/><rect x="1221" y="57" width="1" height="1.6" fill="#9cdcfe" opacity="0.32"/><rect x="1222" y="57" width="1" height="1.6" fill="#9cdcfe" opacity="0.32"/><rect x="1223" y="57" width="1" height="1.6" fill="#9cdcfe" opacity="0.32"/><rect x="1224" y="57" width="1" height="1.6" fill="#cccccc" opacity="0.32"/><rect x="1226" y="57" width="1" height="1.6" fill="#4ec9b0" opacity="0.32"/><rect x="1227" y="57" width="1" height="1.6" fill="#4ec9b0" opacity="0.32"/><rect x="1228" y="57" width="1" height="1.6" fill="#4ec9b0" opacity="0.32"/><rect x="1229" y="57" width="1" height="1.6" fill="#4ec9b0" opacity="0.32"/><rect x="1230" y="57" width="1" height="1.6" fill="#4ec9b0" opacity="0.32"/><rect x="1231" y="57" width="1" height="1.6" fill="#4ec9b0" opacity="0.32"/><rect x="1232" y="57" width="1" height="1.6" fill="#cccccc" opacity="0.32"/><rect x="1215" y="59" width="1" height="1.6" fill="#da70d6" opacity="0.32"/><rect x="1216" y="59" width="1" height="1.6" fill="#ffd700" opacity="0.32"/><rect x="1217" y="59" width="1" height="1.6" fill="#cccccc" opacity="0.32"/><rect x="1219" y="59" width="1" height="1.6" fill="#569cd6" opacity="0.32"/><rect x="1220" y="59" width="1" height="1.6" fill="#569cd6" opacity="0.32"/><rect x="1221" y="59" width="1" height="1.6" fill="#569cd6" opacity="0.32"/><rect x="1222" y="59" width="1" height="1.6" fill="#569cd6" opacity="0.32"/><rect x="1223" y="59" width="1" height="1.6" fill="#569cd6" opacity="0.32"/><rect x="1224" y="59" width="1" height="1.6" fill="#569cd6" opacity="0.32"/><rect x="1225" y="59" width="1" height="1.6" fill="#ffd700" opacity="0.32"/><rect x="1226" y="59" width="1" height="1.6" fill="#ce9178" opacity="0.32"/><rect x="1227" y="59" width="1" height="1.6" fill="#ce9178" opacity="0.32"/><rect x="1228" y="59" width="1" height="1.6" fill="#ce9178" opacity="0.32"/><rect x="1229" y="59" width="1" height="1.6" fill="#ce9178" opacity="0.32"/><rect x="1230" y="59" width="1" height="1.6" fill="#ce9178" opacity="0.32"/><rect x="1231" y="59" width="1" height="1.6" fill="#ce9178" opacity="0.32"/><rect x="1232" y="59" width="1" height="1.6" fill="#ce9178" opacity="0.32"/><rect x="1233" y="59" width="1" height="1.6" fill="#ce9178" opacity="0.32"/><rect x="1234" y="59" width="1" height="1.6" fill="#ce9178" opacity="0.32"/><rect x="1235" y="59" width="1" height="1.6" fill="#ce9178" opacity="0.32"/><rect x="1236" y="59" width="1" height="1.6" fill="#ce9178" opacity="0.32"/><rect x="1237" y="59" width="1" height="1.6" fill="#ce9178" opacity="0.32"/><rect x="1238" y="59" width="1" height="1.6" fill="#ce9178" opacity="0.32"/><rect x="1239" y="59" width="1" height="1.6" fill="#ce9178" opacity="0.32"/><rect x="1240" y="59" width="1" height="1.6" fill="#ce9178" opacity="0.32"/><rect x="1241" y="59" width="1" height="1.6" fill="#ce9178" opacity="0.32"/><rect x="1242" y="59" width="1" height="1.6" fill="#ce9178" opacity="0.32"/><rect x="1243" y="59" width="1" height="1.6" fill="#ce9178" opacity="0.32"/><rect x="1244" y="59" width="1" height="1.6" fill="#ce9178" opacity="0.32"/><rect x="1245" y="59" width="1" height="1.6" fill="#ffd700" opacity="0.32"/><rect x="1246" y="59" width="1" height="1.6" fill="#cccccc" opacity="0.32"/><rect x="1247" y="59" width="1" height="1.6" fill="#4ec9b0" opacity="0.32"/><rect x="1248" y="59" width="1" height="1.6" fill="#4ec9b0" opacity="0.32"/><rect x="1249" y="59" width="1" height="1.6" fill="#4ec9b0" opacity="0.32"/><rect x="1250" y="59" width="1" height="1.6" fill="#cccccc" opacity="0.32"/><rect x="1251" y="59" width="1" height="1.6" fill="#4ec9b0" opacity="0.32"/><rect x="1252" y="59" width="1" height="1.6" fill="#4ec9b0" opacity="0.32"/><rect x="1253" y="59" width="1" height="1.6" fill="#4ec9b0" opacity="0.32"/><rect x="1254" y="59" width="1" height="1.6" fill="#4ec9b0" opacity="0.32"/><rect x="1255" y="59" width="1" height="1.6" fill="#4ec9b0" opacity="0.32"/><rect x="1256" y="59" width="1" height="1.6" fill="#4ec9b0" opacity="0.32"/><rect x="1257" y="59" width="1" height="1.6" fill="#4ec9b0" opacity="0.32"/><rect x="1258" y="59" width="1" height="1.6" fill="#cccccc" opacity="0.32"/><rect x="1215" y="61" width="1" height="1.6" fill="#c586c0" opacity="0.32"/><rect x="1216" y="61" width="1" height="1.6" fill="#c586c0" opacity="0.32"/><rect x="1217" y="61" width="1" height="1.6" fill="#c586c0" opacity="0.32"/><rect x="1218" y="61" width="1" height="1.6" fill="#c586c0" opacity="0.32"/><rect x="1219" y="61" width="1" height="1.6" fill="#c586c0" opacity="0.32"/><rect x="1220" y="61" width="1" height="1.6" fill="#c586c0" opacity="0.32"/><rect x="1222" y="61" width="1" height="1.6" fill="#c586c0" opacity="0.32"/><rect x="1223" y="61" width="1" height="1.6" fill="#c586c0" opacity="0.32"/><rect x="1224" y="61" width="1" height="1.6" fill="#c586c0" opacity="0.32"/><rect x="1225" y="61" width="1" height="1.6" fill="#c586c0" opacity="0.32"/><rect x="1226" y="61" width="1" height="1.6" fill="#c586c0" opacity="0.32"/><rect x="1227" y="61" width="1" height="1.6" fill="#c586c0" opacity="0.32"/><rect x="1228" y="61" width="1" height="1.6" fill="#c586c0" opacity="0.32"/><rect x="1230" y="61" width="1" height="1.6" fill="#dcdcaa" opacity="0.32"/><rect x="1231" y="61" width="1" height="1.6" fill="#dcdcaa" opacity="0.32"/><rect x="1232" y="61" width="1" height="1.6" fill="#dcdcaa" opacity="0.32"/><rect x="1233" y="61" width="1" height="1.6" fill="#dcdcaa" opacity="0.32"/><rect x="1234" y="61" width="1" height="1.6" fill="#dcdcaa" opacity="0.32"/><rect x="1235" y="61" width="1" height="1.6" fill="#dcdcaa" opacity="0.32"/><rect x="1236" y="61" width="1" height="1.6" fill="#dcdcaa" opacity="0.32"/><rect x="1237" y="61" width="1" height="1.6" fill="#dcdcaa" opacity="0.32"/><rect x="1238" y="61" width="1" height="1.6" fill="#dcdcaa" opacity="0.32"/><rect x="1239" y="61" width="1" height="1.6" fill="#cccccc" opacity="0.32"/><rect x="1212" y="55" width="1.5" height="6" fill="#1b80d4"/><rect x="1839" y="55" width="1" height="1.5" fill="#6a9955" opacity="0.55"/><rect x="1840" y="55" width="1" height="1.5" fill="#6a9955" opacity="0.55"/><rect x="1840" y="57" width="1" height="1.5" fill="#6a9955" opacity="0.55"/><rect x="1842" y="57" width="1" height="1.5" fill="#6a9955" opacity="0.55"/><rect x="1844" y="57" width="1" height="1.5" fill="#6a9955" opacity="0.55"/><rect x="1846" y="57" width="1" height="1.5" fill="#6a9955" opacity="0.55"/><rect x="1848" y="57" width="1" height="1.5" fill="#6a9955" opacity="0.55"/><rect x="1850" y="57" width="1" height="1.5" fill="#6a9955" opacity="0.55"/><rect x="1852" y="57" width="1" height="1.5" fill="#6a9955" opacity="0.55"/><rect x="1854" y="57" width="1" height="1.5" fill="#6a9955" opacity="0.55"/><rect x="1856" y="57" width="1" height="1.5" fill="#6a9955" opacity="0.55"/><rect x="1858" y="57" width="1" height="1.5" fill="#6a9955" opacity="0.55"/><rect x="1860" y="57" width="1" height="1.5" fill="#6a9955" opacity="0.55"/><rect x="1862" y="57" width="1" height="1.5" fill="#6a9955" opacity="0.55"/><rect x="1864" y="57" width="1" height="1.5" fill="#6a9955" opacity="0.55"/><rect x="1866" y="57" width="1" height="1.5" fill="#6a9955" opacity="0.55"/><rect x="1868" y="57" width="1" height="1.5" fill="#6a9955" opacity="0.55"/><rect x="1870" y="57" width="1" height="1.5" fill="#6a9955" opacity="0.55"/><rect x="1872" y="57" width="1" height="1.5" fill="#6a9955" opacity="0.55"/><rect x="1874" y="57" width="1" height="1.5" fill="#6a9955" opacity="0.55"/><rect x="1876" y="57" width="1" height="1.5" fill="#6a9955" opacity="0.55"/><rect x="1878" y="57" width="1" height="1.5" fill="#6a9955" opacity="0.55"/><rect x="1880" y="57" width="1" height="1.5" fill="#6a9955" opacity="0.55"/><rect x="1882" y="57" width="1" height="1.5" fill="#6a9955" opacity="0.55"/><rect x="1884" y="57" width="1" height="1.5" fill="#6a9955" opacity="0.55"/><rect x="1886" y="57" width="1" height="1.5" fill="#6a9955" opacity="0.55"/><rect x="1888" y="57" width="1" height="1.5" fill="#6a9955" opacity="0.55"/><rect x="1890" y="57" width="1" height="1.5" fill="#6a9955" opacity="0.55"/><rect x="1892" y="57" width="1" height="1.5" fill="#6a9955" opacity="0.55"/><rect x="1894" y="57" width="1" height="1.5" fill="#6a9955" opacity="0.55"/><rect x="1840" y="59" width="1" height="1.5" fill="#6a9955" opacity="0.55"/><rect x="1841" y="59" width="1" height="1.5" fill="#6a9955" opacity="0.55"/><rect x="1842" y="59" width="1" height="1.5" fill="#6a9955" opacity="0.55"/><rect x="1843" y="59" width="1" height="1.5" fill="#6a9955" opacity="0.55"/><rect x="1845" y="59" width="1" height="1.5" fill="#6a9955" opacity="0.55"/><rect x="1846" y="59" width="1" height="1.5" fill="#6a9955" opacity="0.55"/><rect x="1848" y="59" width="1" height="1.5" fill="#6a9955" opacity="0.55"/><rect x="1850" y="59" width="1" height="1.5" fill="#6a9955" opacity="0.55"/><rect x="1851" y="59" width="1" height="1.5" fill="#6a9955" opacity="0.55"/><rect x="1852" y="59" width="1" height="1.5" fill="#6a9955" opacity="0.55"/><rect x="1853" y="59" width="1" height="1.5" fill="#6a9955" opacity="0.55"/><rect x="1854" y="59" width="1" height="1.5" fill="#6a9955" opacity="0.55"/><rect x="1855" y="59" width="1" height="1.5" fill="#6a9955" opacity="0.55"/><rect x="1856" y="59" width="1" height="1.5" fill="#6a9955" opacity="0.55"/><rect x="1858" y="59" width="1" height="1.5" fill="#6a9955" opacity="0.55"/><rect x="1859" y="59" width="1" height="1.5" fill="#6a9955" opacity="0.55"/><rect x="1860" y="59" width="1" height="1.5" fill="#6a9955" opacity="0.55"/><rect x="1861" y="59" width="1" height="1.5" fill="#6a9955" opacity="0.55"/><rect x="1862" y="59" width="1" height="1.5" fill="#6a9955" opacity="0.55"/><rect x="1863" y="59" width="1" height="1.5" fill="#6a9955" opacity="0.55"/><rect x="1864" y="59" width="1" height="1.5" fill="#6a9955" opacity="0.55"/><rect x="1865" y="59" width="1" height="1.5" fill="#6a9955" opacity="0.55"/><rect x="1866" y="59" width="1" height="1.5" fill="#6a9955" opacity="0.55"/><rect x="1868" y="59" width="1" height="1.5" fill="#6a9955" opacity="0.55"/><rect x="1869" y="59" width="1" height="1.5" fill="#6a9955" opacity="0.55"/><rect x="1870" y="59" width="1" height="1.5" fill="#6a9955" opacity="0.55"/><rect x="1872" y="59" width="1" height="1.5" fill="#6a9955" opacity="0.55"/><rect x="1873" y="59" width="1" height="1.5" fill="#6a9955" opacity="0.55"/><rect x="1874" y="59" width="1" height="1.5" fill="#6a9955" opacity="0.55"/><rect x="1876" y="59" width="1" height="1.5" fill="#6a9955" opacity="0.55"/><rect x="1877" y="59" width="1" height="1.5" fill="#6a9955" opacity="0.55"/><rect x="1879" y="59" width="1" height="1.5" fill="#6a9955" opacity="0.55"/><rect x="1880" y="59" width="1" height="1.5" fill="#6a9955" opacity="0.55"/><rect x="1881" y="59" width="1" height="1.5" fill="#6a9955" opacity="0.55"/><rect x="1882" y="59" width="1" height="1.5" fill="#6a9955" opacity="0.55"/><rect x="1883" y="59" width="1" height="1.5" fill="#6a9955" opacity="0.55"/><rect x="1884" y="59" width="1" height="1.5" fill="#6a9955" opacity="0.55"/><rect x="1885" y="59" width="1" height="1.5" fill="#6a9955" opacity="0.55"/><rect x="1886" y="59" width="1" height="1.5" fill="#6a9955" opacity="0.55"/><rect x="1840" y="61" width="1" height="1.5" fill="#6a9955" opacity="0.55"/><rect x="1842" y="61" width="1" height="1.5" fill="#6a9955" opacity="0.55"/><rect x="1844" y="61" width="1" height="1.5" fill="#6a9955" opacity="0.55"/><rect x="1846" y="61" width="1" height="1.5" fill="#6a9955" opacity="0.55"/><rect x="1848" y="61" width="1" height="1.5" fill="#6a9955" opacity="0.55"/><rect x="1850" y="61" width="1" height="1.5" fill="#6a9955" opacity="0.55"/><rect x="1852" y="61" width="1" height="1.5" fill="#6a9955" opacity="0.55"/><rect x="1854" y="61" width="1" height="1.5" fill="#6a9955" opacity="0.55"/><rect x="1856" y="61" width="1" height="1.5" fill="#6a9955" opacity="0.55"/><rect x="1858" y="61" width="1" height="1.5" fill="#6a9955" opacity="0.55"/><rect x="1860" y="61" width="1" height="1.5" fill="#6a9955" opacity="0.55"/><rect x="1862" y="61" width="1" height="1.5" fill="#6a9955" opacity="0.55"/><rect x="1864" y="61" width="1" height="1.5" fill="#6a9955" opacity="0.55"/><rect x="1866" y="61" width="1" height="1.5" fill="#6a9955" opacity="0.55"/><rect x="1868" y="61" width="1" height="1.5" fill="#6a9955" opacity="0.55"/><rect x="1870" y="61" width="1" height="1.5" fill="#6a9955" opacity="0.55"/><rect x="1872" y="61" width="1" height="1.5" fill="#6a9955" opacity="0.55"/><rect x="1874" y="61" width="1" height="1.5" fill="#6a9955" opacity="0.55"/><rect x="1876" y="61" width="1" height="1.5" fill="#6a9955" opacity="0.55"/><rect x="1878" y="61" width="1" height="1.5" fill="#6a9955" opacity="0.55"/><rect x="1880" y="61" width="1" height="1.5" fill="#6a9955" opacity="0.55"/><rect x="1882" y="61" width="1" height="1.5" fill="#6a9955" opacity="0.55"/><rect x="1884" y="61" width="1" height="1.5" fill="#6a9955" opacity="0.55"/><rect x="1886" y="61" width="1" height="1.5" fill="#6a9955" opacity="0.55"/><rect x="1888" y="61" width="1" height="1.5" fill="#6a9955" opacity="0.55"/><rect x="1890" y="61" width="1" height="1.5" fill="#6a9955" opacity="0.55"/><rect x="1892" y="61" width="1" height="1.5" fill="#6a9955" opacity="0.55"/><rect x="1894" y="61" width="1" height="1.5" fill="#6a9955" opacity="0.55"/><rect x="1840" y="63" width="1" height="1.5" fill="#6a9955" opacity="0.55"/><rect x="1841" y="63" width="1" height="1.5" fill="#6a9955" opacity="0.55"/><rect x="1842" y="63" width="1" height="1.5" fill="#6a9955" opacity="0.55"/><rect x="1843" y="63" width="1" height="1.5" fill="#6a9955" opacity="0.55"/><rect x="1844" y="63" width="1" height="1.5" fill="#6a9955" opacity="0.55"/><rect x="1845" y="63" width="1" height="1.5" fill="#6a9955" opacity="0.55"/><rect x="1847" y="63" width="1" height="1.5" fill="#6a9955" opacity="0.55"/><rect x="1848" y="63" width="1" height="1.5" fill="#6a9955" opacity="0.55"/><rect x="1849" y="63" width="1" height="1.5" fill="#6a9955" opacity="0.55"/><rect x="1850" y="63" width="1" height="1.5" fill="#6a9955" opacity="0.55"/><rect x="1852" y="63" width="1" height="1.5" fill="#6a9955" opacity="0.55"/><rect x="1853" y="63" width="1" height="1.5" fill="#6a9955" opacity="0.55"/><rect x="1854" y="63" width="1" height="1.5" fill="#6a9955" opacity="0.55"/><rect x="1855" y="63" width="1" height="1.5" fill="#6a9955" opacity="0.55"/><rect x="1857" y="63" width="1" height="1.5" fill="#6a9955" opacity="0.55"/><rect x="1858" y="63" width="1" height="1.5" fill="#6a9955" opacity="0.55"/><rect x="1859" y="63" width="1" height="1.5" fill="#6a9955" opacity="0.55"/><rect x="1861" y="63" width="1" height="1.5" fill="#6a9955" opacity="0.55"/><rect x="1862" y="63" width="1" height="1.5" fill="#6a9955" opacity="0.55"/><rect x="1863" y="63" width="1" height="1.5" fill="#6a9955" opacity="0.55"/><rect x="1865" y="63" width="1" height="1.5" fill="#6a9955" opacity="0.55"/><rect x="1866" y="63" width="1" height="1.5" fill="#6a9955" opacity="0.55"/><rect x="1867" y="63" width="1" height="1.5" fill="#6a9955" opacity="0.55"/><rect x="1868" y="63" width="1" height="1.5" fill="#6a9955" opacity="0.55"/><rect x="1869" y="63" width="1" height="1.5" fill="#6a9955" opacity="0.55"/><rect x="1870" y="63" width="1" height="1.5" fill="#6a9955" opacity="0.55"/><rect x="1871" y="63" width="1" height="1.5" fill="#6a9955" opacity="0.55"/><rect x="1873" y="63" width="1" height="1.5" fill="#6a9955" opacity="0.55"/><rect x="1874" y="63" width="1" height="1.5" fill="#6a9955" opacity="0.55"/><rect x="1875" y="63" width="1" height="1.5" fill="#6a9955" opacity="0.55"/><rect x="1876" y="63" width="1" height="1.5" fill="#6a9955" opacity="0.55"/><rect x="1878" y="63" width="1" height="1.5" fill="#6a9955" opacity="0.55"/><rect x="1879" y="63" width="1" height="1.5" fill="#6a9955" opacity="0.55"/><rect x="1880" y="63" width="1" height="1.5" fill="#6a9955" opacity="0.55"/><rect x="1881" y="63" width="1" height="1.5" fill="#6a9955" opacity="0.55"/><rect x="1883" y="63" width="1" height="1.5" fill="#6a9955" opacity="0.55"/><rect x="1884" y="63" width="1" height="1.5" fill="#6a9955" opacity="0.55"/><rect x="1885" y="63" width="1" height="1.5" fill="#6a9955" opacity="0.55"/><rect x="1886" y="63" width="1" height="1.5" fill="#6a9955" opacity="0.55"/><rect x="1887" y="63" width="1" height="1.5" fill="#6a9955" opacity="0.55"/><rect x="1888" y="63" width="1" height="1.5" fill="#6a9955" opacity="0.55"/><rect x="1889" y="63" width="1" height="1.5" fill="#6a9955" opacity="0.55"/><rect x="1890" y="63" width="1" height="1.5" fill="#6a9955" opacity="0.55"/><rect x="1840" y="65" width="1" height="1.5" fill="#6a9955" opacity="0.55"/><rect x="1842" y="65" width="1" height="1.5" fill="#6a9955" opacity="0.55"/><rect x="1844" y="65" width="1" height="1.5" fill="#6a9955" opacity="0.55"/><rect x="1846" y="65" width="1" height="1.5" fill="#6a9955" opacity="0.55"/><rect x="1848" y="65" width="1" height="1.5" fill="#6a9955" opacity="0.55"/><rect x="1850" y="65" width="1" height="1.5" fill="#6a9955" opacity="0.55"/><rect x="1852" y="65" width="1" height="1.5" fill="#6a9955" opacity="0.55"/><rect x="1854" y="65" width="1" height="1.5" fill="#6a9955" opacity="0.55"/><rect x="1856" y="65" width="1" height="1.5" fill="#6a9955" opacity="0.55"/><rect x="1858" y="65" width="1" height="1.5" fill="#6a9955" opacity="0.55"/><rect x="1860" y="65" width="1" height="1.5" fill="#6a9955" opacity="0.55"/><rect x="1862" y="65" width="1" height="1.5" fill="#6a9955" opacity="0.55"/><rect x="1864" y="65" width="1" height="1.5" fill="#6a9955" opacity="0.55"/><rect x="1866" y="65" width="1" height="1.5" fill="#6a9955" opacity="0.55"/><rect x="1868" y="65" width="1" height="1.5" fill="#6a9955" opacity="0.55"/><rect x="1870" y="65" width="1" height="1.5" fill="#6a9955" opacity="0.55"/><rect x="1872" y="65" width="1" height="1.5" fill="#6a9955" opacity="0.55"/><rect x="1874" y="65" width="1" height="1.5" fill="#6a9955" opacity="0.55"/><rect x="1876" y="65" width="1" height="1.5" fill="#6a9955" opacity="0.55"/><rect x="1878" y="65" width="1" height="1.5" fill="#6a9955" opacity="0.55"/><rect x="1880" y="65" width="1" height="1.5" fill="#6a9955" opacity="0.55"/><rect x="1882" y="65" width="1" height="1.5" fill="#6a9955" opacity="0.55"/><rect x="1884" y="65" width="1" height="1.5" fill="#6a9955" opacity="0.55"/><rect x="1886" y="65" width="1" height="1.5" fill="#6a9955" opacity="0.55"/><rect x="1888" y="65" width="1" height="1.5" fill="#6a9955" opacity="0.55"/><rect x="1890" y="65" width="1" height="1.5" fill="#6a9955" opacity="0.55"/><rect x="1892" y="65" width="1" height="1.5" fill="#6a9955" opacity="0.55"/><rect x="1894" y="65" width="1" height="1.5" fill="#6a9955" opacity="0.55"/><rect x="1840" y="67" width="1" height="1.5" fill="#6a9955" opacity="0.55"/><rect x="1841" y="67" width="1" height="1.5" fill="#6a9955" opacity="0.55"/><rect x="1839" y="69" width="58" height="2" fill="#27405a" opacity="0.7"/><rect x="1839" y="69" width="1" height="1.5" fill="#c586c0" opacity="0.3"/><rect x="1840" y="69" width="1" height="1.5" fill="#c586c0" opacity="0.3"/><rect x="1841" y="69" width="1" height="1.5" fill="#c586c0" opacity="0.3"/><rect x="1842" y="69" width="1" height="1.5" fill="#c586c0" opacity="0.3"/><rect x="1843" y="69" width="1" height="1.5" fill="#c586c0" opacity="0.3"/><rect x="1844" y="69" width="1" height="1.5" fill="#c586c0" opacity="0.3"/><rect x="1846" y="69" width="1" height="1.5" fill="#569cd6" opacity="0.3"/><rect x="1847" y="69" width="1" height="1.5" fill="#569cd6" opacity="0.3"/><rect x="1848" y="69" width="1" height="1.5" fill="#569cd6" opacity="0.3"/><rect x="1849" y="69" width="1" height="1.5" fill="#569cd6" opacity="0.3"/><rect x="1850" y="69" width="1" height="1.5" fill="#569cd6" opacity="0.3"/><rect x="1851" y="69" width="1" height="1.5" fill="#569cd6" opacity="0.3"/><rect x="1852" y="69" width="1" height="1.5" fill="#569cd6" opacity="0.3"/><rect x="1853" y="69" width="1" height="1.5" fill="#569cd6" opacity="0.3"/><rect x="1855" y="69" width="1" height="1.5" fill="#dcdcaa" opacity="0.3"/><rect x="1856" y="69" width="1" height="1.5" fill="#dcdcaa" opacity="0.3"/><rect x="1857" y="69" width="1" height="1.5" fill="#dcdcaa" opacity="0.3"/><rect x="1858" y="69" width="1" height="1.5" fill="#dcdcaa" opacity="0.3"/><rect x="1859" y="69" width="1" height="1.5" fill="#dcdcaa" opacity="0.3"/><rect x="1860" y="69" width="1" height="1.5" fill="#dcdcaa" opacity="0.3"/><rect x="1861" y="69" width="1" height="1.5" fill="#dcdcaa" opacity="0.3"/><rect x="1862" y="69" width="1" height="1.5" fill="#dcdcaa" opacity="0.3"/><rect x="1863" y="69" width="1" height="1.5" fill="#dcdcaa" opacity="0.3"/><rect x="1864" y="69" width="1" height="1.5" fill="#ffd700" opacity="0.3"/><rect x="1865" y="69" width="1" height="1.5" fill="#da70d6" opacity="0.3"/><rect x="1867" y="69" width="1" height="1.5" fill="#9cdcfe" opacity="0.3"/><rect x="1868" y="69" width="1" height="1.5" fill="#9cdcfe" opacity="0.3"/><rect x="1869" y="69" width="1" height="1.5" fill="#9cdcfe" opacity="0.3"/><rect x="1870" y="69" width="1" height="1.5" fill="#9cdcfe" opacity="0.3"/><rect x="1871" y="69" width="1" height="1.5" fill="#9cdcfe" opacity="0.3"/><rect x="1873" y="69" width="1" height="1.5" fill="#da70d6" opacity="0.3"/><rect x="1874" y="69" width="1" height="1.5" fill="#cccccc" opacity="0.3"/><rect x="1876" y="69" width="1" height="1.5" fill="#da70d6" opacity="0.3"/><rect x="1878" y="69" width="1" height="1.5" fill="#9cdcfe" opacity="0.3"/><rect x="1879" y="69" width="1" height="1.5" fill="#9cdcfe" opacity="0.3"/><rect x="1880" y="69" width="1" height="1.5" fill="#9cdcfe" opacity="0.3"/><rect x="1881" y="69" width="1" height="1.5" fill="#9cdcfe" opacity="0.3"/><rect x="1882" y="69" width="1" height="1.5" fill="#9cdcfe" opacity="0.3"/><rect x="1883" y="69" width="1" height="1.5" fill="#cccccc" opacity="0.3"/><rect x="1885" y="69" width="1" height="1.5" fill="#4ec9b0" opacity="0.3"/><rect x="1886" y="69" width="1" height="1.5" fill="#4ec9b0" opacity="0.3"/><rect x="1887" y="69" width="1" height="1.5" fill="#4ec9b0" opacity="0.3"/><rect x="1888" y="69" width="1" height="1.5" fill="#4ec9b0" opacity="0.3"/><rect x="1889" y="69" width="1" height="1.5" fill="#4ec9b0" opacity="0.3"/><rect x="1890" y="69" width="1" height="1.5" fill="#4ec9b0" opacity="0.3"/><rect x="1892" y="69" width="1" height="1.5" fill="#da70d6" opacity="0.3"/><rect x="1893" y="69" width="1" height="1.5" fill="#ffd700" opacity="0.3"/><rect x="1839" y="71" width="1" height="1.5" fill="#cccccc" opacity="0.32"/><rect x="1839" y="75" width="1" height="1.5" fill="#c586c0" opacity="0.32"/><rect x="1840" y="75" width="1" height="1.5" fill="#c586c0" opacity="0.32"/><rect x="1841" y="75" width="1" height="1.5" fill="#c586c0" opacity="0.32"/><rect x="1842" y="75" width="1" height="1.5" fill="#c586c0" opacity="0.32"/><rect x="1843" y="75" width="1" height="1.5" fill="#c586c0" opacity="0.32"/><rect x="1844" y="75" width="1" height="1.5" fill="#c586c0" opacity="0.32"/><rect x="1846" y="75" width="1" height="1.5" fill="#c586c0" opacity="0.32"/><rect x="1847" y="75" width="1" height="1.5" fill="#c586c0" opacity="0.32"/><rect x="1848" y="75" width="1" height="1.5" fill="#c586c0" opacity="0.32"/><rect x="1849" y="75" width="1" height="1.5" fill="#c586c0" opacity="0.32"/><rect x="1850" y="75" width="1" height="1.5" fill="#c586c0" opacity="0.32"/><rect x="1851" y="75" width="1" height="1.5" fill="#c586c0" opacity="0.32"/><rect x="1852" y="75" width="1" height="1.5" fill="#c586c0" opacity="0.32"/><rect x="1854" y="75" width="1" height="1.5" fill="#dcdcaa" opacity="0.32"/><rect x="1855" y="75" width="1" height="1.5" fill="#dcdcaa" opacity="0.32"/><rect x="1856" y="75" width="1" height="1.5" fill="#dcdcaa" opacity="0.32"/><rect x="1857" y="75" width="1" height="1.5" fill="#dcdcaa" opacity="0.32"/><rect x="1858" y="75" width="1" height="1.5" fill="#dcdcaa" opacity="0.32"/><rect x="1859" y="75" width="1" height="1.5" fill="#dcdcaa" opacity="0.32"/><rect x="1860" y="75" width="1" height="1.5" fill="#dcdcaa" opacity="0.32"/><rect x="1861" y="75" width="1" height="1.5" fill="#dcdcaa" opacity="0.32"/><rect x="1862" y="75" width="1" height="1.5" fill="#dcdcaa" opacity="0.32"/><rect x="1863" y="75" width="1" height="1.5" fill="#cccccc" opacity="0.32"/><rect x="1839" y="77" width="1" height="1.5" fill="#c586c0" opacity="0.32"/><rect x="1840" y="77" width="1" height="1.5" fill="#c586c0" opacity="0.32"/><rect x="1841" y="77" width="1" height="1.5" fill="#c586c0" opacity="0.32"/><rect x="1842" y="77" width="1" height="1.5" fill="#c586c0" opacity="0.32"/><rect x="1843" y="77" width="1" height="1.5" fill="#c586c0" opacity="0.32"/><rect x="1844" y="77" width="1" height="1.5" fill="#c586c0" opacity="0.32"/><rect x="1846" y="77" width="1" height="1.5" fill="#569cd6" opacity="0.32"/><rect x="1847" y="77" width="1" height="1.5" fill="#569cd6" opacity="0.32"/><rect x="1848" y="77" width="1" height="1.5" fill="#569cd6" opacity="0.32"/><rect x="1849" y="77" width="1" height="1.5" fill="#569cd6" opacity="0.32"/><rect x="1850" y="77" width="1" height="1.5" fill="#569cd6" opacity="0.32"/><rect x="1852" y="77" width="1" height="1.5" fill="#4fc1ff" opacity="0.32"/><rect x="1836" y="76" width="1.5" height="3" fill="#1b80d4"/></svg>
<div class="a" style="left:1899px;top:55px;width:6px;height:744px;background:#424242"></div>
<div class="a" style="left:1899px;top:253px;width:5px;height:16px;background:#3b6a92"></div>
<div class="a" style="left:1899px;top:251px;width:6px;height:2px;background:#6f7a84"></div>
<div class="a" style="left:1361px;top:984px;width:426px;height:6px;background:#474747"></div>
<div class="a" style="left:1121px;top:325px;width:332px;height:52px;background:#202020;border:1px solid #454545;border-right:none"></div>
<svg width="1" height="1" style="left:0;top:0" fill="none" stroke="#cccccc" stroke-width="1.1"><path d="M1436 335.5 L1444 343.5 M1444 335.5 L1436 343.5"/></svg>
<div class="a" style="left:1452px;top:325px;width:432px;height:256px;background:#202020;border:1px solid #454545;border-radius:3px"></div>
<div class="a" style="left:1453px;top:326px;width:430px;height:21px;background:#04395e"></div>
<div class="code" style="left:1478px;top:327px"><span style="color:#2aaaff;font-weight:bold">f</span><span style="color:#ffffff">ederation</span></div>
<div class="code" style="left:1478px;top:348px"><span style="color:#2aaaff;font-weight:bold">f</span><span style="color:#cccccc">ederation</span></div>
<div class="code" style="left:1478px;top:369px"><span style="color:#2aaaff;font-weight:bold">f</span><span style="color:#cccccc">etch</span></div>
<div class="code" style="left:1476px;top:390px"><span style="color:#2aaaff;font-weight:bold">f</span><span style="color:#cccccc">etchRemote</span></div>
<div class="code" style="left:1478px;top:411px"><span style="color:#2aaaff;font-weight:bold">f</span><span style="color:#cccccc">g</span></div>
<div class="code" style="left:1476px;top:432px"><span style="color:#2aaaff;font-weight:bold">f</span><span style="color:#cccccc">ib</span></div>
<div class="code" style="left:1478px;top:453px"><span style="color:#2aaaff;font-weight:bold">f</span><span style="color:#cccccc">ile</span></div>
<div class="code" style="left:1476px;top:474px"><span style="color:#2aaaff;font-weight:bold">f</span><span style="color:#cccccc">ilterRuntime</span></div>
<div class="code" style="left:1476px;top:495px"><span style="color:#2aaaff;font-weight:bold">f</span><span style="color:#cccccc">ind</span></div>
<div class="code" style="left:1476px;top:516px"><span style="color:#2aaaff;font-weight:bold">f</span><span style="color:#cccccc">indChunk</span></div>
<div class="code" style="left:1476px;top:537px"><span style="color:#2aaaff;font-weight:bold">f</span><span style="color:#cccccc">indConfig</span></div>
<div class="code" style="left:1478px;top:558px"><span style="color:#2aaaff;font-weight:bold">f</span><span style="color:#cccccc">inder</span></div>
<svg width="1" height="1" style="left:0;top:0"><path d="M1463 332.5 H1472.2 M1463 335.1 H1469.5 M1463 337.7 H1472.2 M1463 340.3 H1470" stroke="#cccccc" stroke-width="1.2"/><path d="M1463 353.5 H1472.2 M1463 356.1 H1469.5 M1463 358.7 H1472.2 M1463 361.3 H1470" stroke="#cccccc" stroke-width="1.2"/><path d="M1463 374.5 H1472.2 M1463 377.1 H1469.5 M1463 379.7 H1472.2 M1463 382.3 H1470" stroke="#cccccc" stroke-width="1.2"/><path d="M1457.8 394.9 H1456 V404.1 H1457.8 M1468.4 394.9 H1470.2 V404.1 H1468.4" stroke="#75beff" stroke-width="1.1" fill="none"/><ellipse cx="1463.1" cy="399.5" rx="3.4" ry="2.6" stroke="#75beff" stroke-width="1.1" fill="none"/><path d="M1460.6 401.1 L1465.6 397.9" stroke="#75beff" stroke-width="1"/><path d="M1463 416.5 H1472.2 M1463 419.1 H1469.5 M1463 421.7 H1472.2 M1463 424.3 H1470" stroke="#cccccc" stroke-width="1.2"/><path d="M1463 435.3 L1469 438.5 V444.9 L1463 447.9 L1457 444.9 V438.5 Z M1457 438.5 L1463 441.5 L1469 438.5 M1463 441.5 V447.9" stroke="#b180d7" stroke-width="1.1" fill="none" stroke-linejoin="round"/><path d="M1463 458.5 H1472.2 M1463 461.1 H1469.5 M1463 463.7 H1472.2 M1463 466.3 H1470" stroke="#cccccc" stroke-width="1.2"/><path d="M1463 477.3 L1469 480.5 V486.9 L1463 489.9 L1457 486.9 V480.5 Z M1457 480.5 L1463 483.5 L1469 480.5 M1463 483.5 V489.9" stroke="#b180d7" stroke-width="1.1" fill="none" stroke-linejoin="round"/><path d="M1463 498.3 L1469 501.5 V507.9 L1463 510.9 L1457 507.9 V501.5 Z M1457 501.5 L1463 504.5 L1469 501.5 M1463 504.5 V510.9" stroke="#b180d7" stroke-width="1.1" fill="none" stroke-linejoin="round"/><path d="M1463 519.3 L1469 522.5 V528.9 L1463 531.9 L1457 528.9 V522.5 Z M1457 522.5 L1463 525.5 L1469 522.5 M1463 525.5 V531.9" stroke="#b180d7" stroke-width="1.1" fill="none" stroke-linejoin="round"/><path d="M1463 540.3 L1469 543.5 V549.9 L1463 552.9 L1457 549.9 V543.5 Z M1457 543.5 L1463 546.5 L1469 543.5 M1463 546.5 V552.9" stroke="#b180d7" stroke-width="1.1" fill="none" stroke-linejoin="round"/><path d="M1463 563.5 H1472.2 M1463 566.1 H1469.5 M1463 568.7 H1472.2 M1463 571.3 H1470" stroke="#cccccc" stroke-width="1.2"/></svg>
<svg width="1" height="1" style="left:0;top:0">
<circle cx="1412.4" cy="317.8" r="8.9" fill="none" stroke="#000" stroke-width="2.8"/>
<circle cx="1412.4" cy="317.8" r="8.9" fill="none" stroke="#fff" stroke-width="1.3"/>
<path d="M1407.4 311.0 L1410.4 311.0 L1411.8 312.0 L1413.2 311.0 L1416.2 311.0 L1416.2 313.4 L1413.5 313.4 L1413.5 325.6 L1416.2 325.6 L1416.2 328.0 L1413.2 328.0 L1411.8 327.0 L1410.4 328.0 L1407.4 328.0 L1407.4 325.6 L1410.1 325.6 L1410.1 313.4 L1407.4 313.4 Z" fill="#000" stroke="#000" stroke-width="2.6" stroke-linejoin="round"/>
<path d="M1407.4 311.0 L1410.4 311.0 L1411.8 312.0 L1413.2 311.0 L1416.2 311.0 L1416.2 313.4 L1413.5 313.4 L1413.5 325.6 L1416.2 325.6 L1416.2 328.0 L1413.2 328.0 L1411.8 327.0 L1410.4 328.0 L1407.4 328.0 L1407.4 325.6 L1410.1 325.6 L1410.1 313.4 L1407.4 313.4 Z" fill="#000" stroke="#fff" stroke-width="1.1" stroke-linejoin="round"/>
</svg>
<div class="a" style="left:1865px;top:974px;width:40px;height:16px;background:#000"></div>
<svg width="1" height="1" style="left:0;top:0"><g fill="none" stroke="#fff" stroke-width="1.9"><ellipse cx="1872.5" cy="981.5" rx="2.7" ry="2.8"/><ellipse cx="1888.5" cy="981.5" rx="2.7" ry="2.8"/><ellipse cx="1896.5" cy="981.5" rx="2.7" ry="2.8"/></g><g fill="#fff"><circle cx="1872.5" cy="981.5" r="0.7"/><circle cx="1888.5" cy="981.5" r="0.7"/><circle cx="1896.5" cy="981.5" r="0.7"/><rect x="1880" y="979" width="2" height="1.8"/><rect x="1880" y="983" width="2" height="1.8"/></g></svg>
<div class="sans" style="left:72.90px;top:7px;font-size:13.5px;letter-spacing:0.131px;color:#9d9d9d;font-style:normal;">nx-welcome.tsx</div>
<div class="sans" style="left:57.20px;top:35px;font-size:13.5px;letter-spacing:0.000px;color:#a9a9a9;font-style:normal;">apps</div>
<div class="sans" style="left:101.70px;top:35px;font-size:13.5px;letter-spacing:0.405px;color:#a9a9a9;font-style:normal;">react-ts-nested-remote</div>
<div class="sans" style="left:263.20px;top:35px;font-size:13.5px;letter-spacing:-0.150px;color:#a9a9a9;font-style:normal;">src</div>
<div class="sans" style="left:297.60px;top:35px;font-size:13.5px;letter-spacing:-0.150px;color:#a9a9a9;font-style:normal;">app</div>
<div class="sans" style="left:357.60px;top:35px;font-size:13.5px;letter-spacing:0.169px;color:#a9a9a9;font-style:normal;">nx-welcome.tsx</div>
<div class="sans" style="left:468.80px;top:35px;font-size:13.5px;letter-spacing:-0.100px;color:#a9a9a9;font-style:normal;">...</div>
<div class="sans" style="left:112.80px;top:55px;font-size:12px;letter-spacing:0.307px;color:#999999;font-style:normal;">Hanric, 48 minutes ago | 1 author (Hanric)</div>
<div class="sans" style="left:697.30px;top:7px;font-size:13.5px;letter-spacing:0.136px;color:#e2c08d;font-style:italic;">nx-welcome.d.ts</div>
<div class="sans" style="left:801.70px;top:7px;font-size:12.5px;letter-spacing:0.000px;color:#e2c08d;font-style:italic;">M</div>
<div class="sans" style="left:673.60px;top:35px;font-size:13.5px;letter-spacing:0.229px;color:#a9a9a9;font-style:normal;">react_ts_remote</div>
<div class="sans" style="left:790.70px;top:35px;font-size:13.5px;letter-spacing:0.246px;color:#a9a9a9;font-style:normal;">compiled-types</div>
<div class="sans" style="left:901.80px;top:35px;font-size:13.5px;letter-spacing:-0.133px;color:#a9a9a9;font-style:normal;">apps</div>
<div class="sans" style="left:946.00px;top:35px;font-size:13.5px;letter-spacing:0.429px;color:#a9a9a9;font-style:normal;">react-ts-remote</div>
<div class="sans" style="left:1059.50px;top:35px;font-size:13.5px;letter-spacing:0.200px;color:#a9a9a9;font-style:normal;">src</div>
<div class="sans" style="left:1094.40px;top:35px;font-size:13.5px;letter-spacing:0.050px;color:#a9a9a9;font-style:normal;">app</div>
<div class="sans" style="left:1154.40px;top:35px;font-size:13.5px;letter-spacing:0.207px;color:#a9a9a9;font-style:normal;">nx-welcome.d.ts</div>
<div class="sans" style="left:1270.80px;top:35px;font-size:13.5px;letter-spacing:0.100px;color:#a9a9a9;font-style:normal;">...</div>
<div class="sans" style="left:738.50px;top:55px;font-size:12px;letter-spacing:0.272px;color:#999999;font-style:normal;">You, 5 seconds ago | 2 authors (You and others)</div>
<div class="sans" style="left:1320.50px;top:7px;font-size:13.5px;letter-spacing:0.113px;color:#f48771;font-style:normal;">nx-welcome.tsx 1</div>
<div class="sans" style="left:1305.00px;top:35px;font-size:13.5px;letter-spacing:0.000px;color:#a9a9a9;font-style:normal;">apps</div>
<div class="sans" style="left:1349.60px;top:35px;font-size:13.5px;letter-spacing:0.436px;color:#a9a9a9;font-style:normal;">react-ts-remote</div>
<div class="sans" style="left:1463.20px;top:35px;font-size:13.5px;letter-spacing:0.050px;color:#a9a9a9;font-style:normal;">src</div>
<div class="sans" style="left:1497.90px;top:35px;font-size:13.5px;letter-spacing:0.150px;color:#a9a9a9;font-style:normal;">app</div>
<div class="sans" style="left:1557.50px;top:35px;font-size:13.5px;letter-spacing:0.215px;color:#a9a9a9;font-style:normal;">nx-welcome.tsx</div>
<div class="sans" style="left:1669.40px;top:35px;font-size:13.5px;letter-spacing:0.100px;color:#a9a9a9;font-style:normal;">...</div>
<div class="sans" style="left:1361.70px;top:55px;font-size:12px;letter-spacing:0.317px;color:#999999;font-style:normal;">Zack Jackson, 9 months ago | 2 authors (DV and others)</div>
<div class="sans" style="left:1127.00px;top:331px;font-size:14px;letter-spacing:0.233px;color:#cccccc;font-style:normal;width:301px;overflow:hidden;">/Users/bytedance/outter/universe/packages/webpack-</div>
<div class="sans" style="left:1126.50px;top:352px;font-size:14px;letter-spacing:0.394px;color:#cccccc;font-style:normal;">bundler-runtime/dist/src/index.d.ts</div>
</body></html>
